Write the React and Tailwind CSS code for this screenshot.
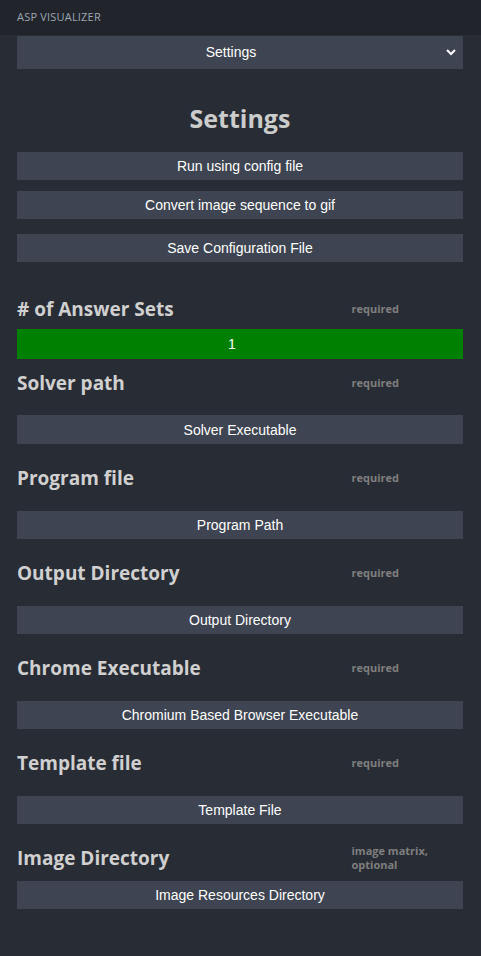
import React from "react";

const labelFont = { fontFamily: '"Open Sans", "Noto Sans", sans-serif' };

const fields = [
  { label: "Solver path", note: "required", button: "Solver Executable", top: "mt-[10px]", gap: "mt-[18px]", h: "h-[29px]" },
  { label: "Program file", note: "required", button: "Program Path", top: "mt-[20px]", gap: "mt-[19px]", h: "h-[28px]" },
  { label: "Output Directory", note: "required", button: "Output Directory", top: "mt-[20px]", gap: "mt-[19px]", h: "h-[28px]" },
  { label: "Chrome Executable", note: "required", button: "Chromium Based Browser Executable", top: "mt-[20px]", gap: "mt-[19px]", h: "h-[28px]" },
  { label: "Template file", note: "required", button: "Template File", top: "mt-[20px]", gap: "mt-[19px]", h: "h-[28px]" },
  { label: "Image Directory", note: "image matrix, optional", button: "Image Resources Directory", top: "mt-[20px]", gap: "mt-[9px]", h: "h-[28px]" },
];

const ActionButton = ({ children, className = "" }) => (
  <button
    type="button"
    className={`w-full bg-[#3e4451] text-white text-[14px] leading-none font-['Liberation_Sans',Arial,sans-serif] ${className}`}
  >
    {children}
  </button>
);

const FieldLabel = ({ label, note, className = "" }) => (
  <div className={`grid grid-cols-4 items-center h-[28px] ${className}`}>
    <h2 className="col-span-3 text-[19px] font-bold text-[#d0d0d0] leading-none" style={labelFont}>
      {label}
    </h2>
    <span className="col-span-1 text-[11px] font-bold text-[#7f7f7f] leading-[14px]" style={labelFont}>
      {note}
    </span>
  </div>
);

export default function App() {
  return (
    <div className="min-h-[956px] bg-[#282c34]">
      <div className="h-[35px] bg-[#21252b] flex items-center px-[17px]">
        <span className="text-[11px] text-[#9da5b4] tracking-[0.2px]" style={labelFont}>
          ASP VISUALIZER
        </span>
      </div>

      <div className="pl-[17px] pr-[18px] pb-10">
        <div className="mt-[1px] h-[33px] bg-[#3e4451] relative flex items-center pr-[18px]">
          <span className="flex-1 text-center text-white text-[14px] font-['Liberation_Sans',Arial,sans-serif]">
            Settings
          </span>
          <svg className="absolute right-[7px] top-[13px]" width="10" height="7" viewBox="0 0 10 7">
            <polyline points="1,1 5,5 9,1" fill="none" stroke="white" strokeWidth="2" />
          </svg>
        </div>

        <h1 className="mt-[33px] text-center text-[25px] font-bold text-[#cccccc] leading-[32px]" style={labelFont}>
          Settings
        </h1>

        <ActionButton className="mt-[18px] h-[28px]">Run using config file</ActionButton>
        <ActionButton className="mt-[11px] h-[28px]">Convert image sequence to gif</ActionButton>
        <ActionButton className="mt-[15px] h-[28px]">Save Configuration File</ActionButton>

        <FieldLabel label="# of Answer Sets" note="required" className="mt-[33px]" />
        <input
          type="text"
          defaultValue="1"
          className="mt-[6px] w-full h-[30px] bg-[#008000] text-white text-center text-[14px] pr-[16px] outline-none font-['Liberation_Sans',Arial,sans-serif]"
        />

        {fields.map((f) => (
          <div key={f.label}>
            <FieldLabel label={f.label} note={f.note} className={f.top} />
            <ActionButton className={`${f.gap} ${f.h}`}>{f.button}</ActionButton>
          </div>
        ))}
      </div>
    </div>
  );
}
